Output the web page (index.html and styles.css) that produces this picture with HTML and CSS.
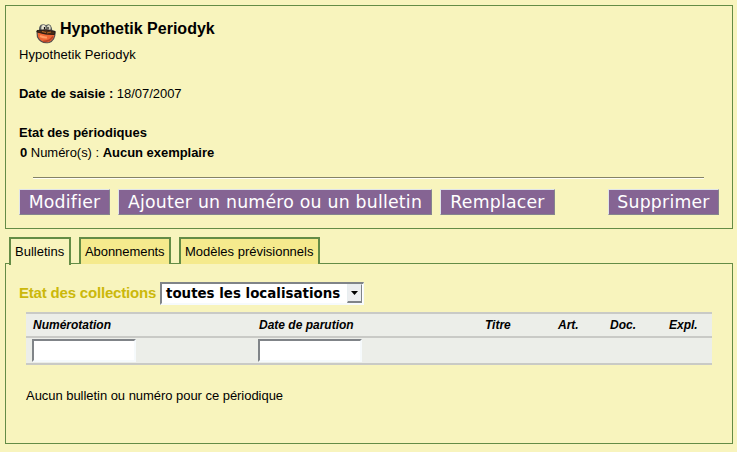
FILE: index.html
```html
<!DOCTYPE html>
<html lang="fr">
<head>
<meta charset="utf-8">
<title>Hypothetik Periodyk</title>
<link rel="stylesheet" href="styles.css">
</head>
<body>
<section class="panel record">
  <h1 class="title">
    <svg class="icon" viewBox="0 0 20 22" width="20" height="22">
      <path d="M3 7Q3 1 7 1.500L10 2Q15-.5 16.500 8Z" fill="#50565a"/>
      <ellipse cx="7.500" cy="5" rx="2.600" ry="3.500" fill="#e8e4d0" stroke="#555" stroke-width=".6"/>
      <ellipse cx="12.700" cy="5" rx="2.400" ry="3.300" fill="#dedac6" stroke="#343c3d" stroke-width=".6"/>
      <path d="M8.500 4v2.500M12 4v2.500" stroke="#111" stroke-width="1.200"/>
      <path d="M1 8.500Q10 5 19 8.500Q19.500 17 13 19.500Q5 21 1.500 14Z" fill="#ef6734" stroke="#564e4e" stroke-width="1.200"/>
      <path d="M1 7.500Q9 6 19 8.500L18.500 11.500Q10 12 1 9Z" fill="#4b2b15" stroke="#161311" stroke-width=".8"/>
      <path d="M6 8.500l4 1M11 10l4-1" stroke="#b36525"/>
      <path d="M4 13q4 2 7 1.500" stroke="#ff9b64" stroke-width="2" fill="none"/>
      <path d="M7 18.500q7 0 10-5" stroke="#b8442a" stroke-width="1.500" fill="none"/>
    </svg>
    <span>Hypothetik Periodyk</span>
  </h1>
  <p class="line subtitle">Hypothetik Periodyk</p>
  <p class="line entry"><b>Date de saisie :</b> 18/07/2007</p>
  <p class="line state"><b>Etat des périodiques</b></p>
  <p class="line count"><b>0</b> Numéro(s) : <b>Aucun exemplaire</b></p>
  <div class="rule"></div>
  <div class="actions">
    <button class="btn modify">Modifier</button>
    <button class="btn add">Ajouter un numéro ou un bulletin</button>
    <button class="btn replace">Remplacer</button>
    <button class="btn delete">Supprimer</button>
  </div>
</section>
<nav class="tabs">
  <span class="tab active">Bulletins</span>
  <span class="tab subs">Abonnements</span>
  <span class="tab models">Modèles prévisionnels</span>
</nav>
<section class="panel issues">
  <div class="collection">
    <h2 class="heading">Etat des collections</h2>
    <div class="select"><span class="value">toutes les localisations</span><span class="arrow"><svg width="7" height="4" viewBox="0 0 7 4"><path d="M0 0h7L3.500 4z"/></svg></span></div>
  </div>
  <div class="table">
    <div class="row head">
      <span>Numérotation</span><span>Date de parution</span><span>Titre</span><span>Art.</span><span>Doc.</span><span>Expl.</span>
    </div>
    <div class="row filter">
      <input class="field" type="text"><input class="field" type="text">
    </div>
  </div>
  <p class="empty">Aucun bulletin ou numéro pour ce périodique</p>
</section>
</body>
</html>
```
FILE: styles.css
```css
* { box-sizing: border-box; }
body {
  margin: 0;
  padding: 5px 4px 0 5px;
  height: 452px;
  overflow: hidden;
  background: #f8f4bd;
  color: #000;
  font: 13px "Liberation Sans", Arial, sans-serif;
}
h1, h2, p { margin: 0; white-space: nowrap; }
.panel { border: 1px solid #648c46; }
.record { height: 224px; padding: 10px 13px 0; }
.title {
  display: flex;
  height: 29px;
  padding-left: 17px;
  font-size: 16px;
  line-height: 25px;
}
.icon { margin: 7px 4px 0 0; }
.line { line-height: 20px; height: 20px; }
.subtitle { letter-spacing: .06px; }
.entry { margin-top: 19px; letter-spacing: -.03px; }
.state { margin-top: 19px; }
.count { padding-left: 1px; letter-spacing: -.03px; }
.rule {
  height: 2px;
  margin: 14px 15px 0 14px;
  border-top: 1px solid #858366;
  border-bottom: 1px solid #fffef5;
}
.actions { display: flex; margin-top: 10px; gap: 8px; }
.btn {
  height: 26px;
  padding: 0;
  border: 1px solid;
  border-color: #e0e4e8 #85848e #85848e #e0e4e8;
  background: #856493;
  color: #fff;
  font: 17.300px/22px "DejaVu Sans", sans-serif;
  letter-spacing: .23px;
  white-space: nowrap;
}
.modify { width: 91px; }
.add { width: 314px; }
.replace { width: 115px; }
.delete { width: 111px; margin-left: auto; }
.tabs {
  display: flex;
  gap: 8px;
  height: 28px;
  margin: 8px 0 -2px 4px;
  position: relative;
}
.tab {
  height: 27px;
  padding-left: 4px;
  border: 2px solid #648c46;
  border-bottom: 0;
  background: #f5ea8d;
  line-height: 26px;
  white-space: nowrap;
}
.active { width: 62px; height: 28px; background: #f8f4bd; }
.subs { width: 92px; letter-spacing: -.06px; }
.models { width: 141px; letter-spacing: -.01px; }
.issues { height: 181px; padding: 18px 20px 0; }
.collection { display: flex; margin-left: -7px; height: 23px; }
.heading {
  width: 141px;
  color: #cbb80b;
  font-size: 15px;
  line-height: 22px;
  letter-spacing: -.19px;
}
.select {
  display: flex;
  justify-content: space-between;
  width: 204px;
  height: 23px;
  padding-left: 4px;
  border: 2px solid;
  border-color: #808488 #f6fafc #f6fafc #808488;
  border-right-width: 1px;
  background: #fff;
}
.value {
  font: bold 13.400px/19px "DejaVu Sans", sans-serif;
  white-space: nowrap;
}
.arrow {
  display: flex;
  align-items: center;
  justify-content: center;
  width: 15px;
  height: 19px;
  margin-right: 1px;
  border: 1px solid #e8eef0;
  border-right-color: #808488;
  border-bottom: 2px solid #808488;
  background: #eceef0;
}
.table {
  width: 686px;
  margin-top: 7px;
  border-top: 2px solid #c9cac6;
  background: #eceee9;
}
.row {
  display: grid;
  grid-template-columns: 226px 226px 73px 52px 59px 44px;
  padding-left: 6px;
  border-bottom: 2px solid #c9cac6;
}
.head {
  height: 24px;
  padding-left: 7px;
  font: italic bold 12px/22px "Liberation Sans", sans-serif;
}
.filter { height: 27px; padding-top: 1px; }
.field {
  width: 104px;
  height: 23px;
  border: 2px solid;
  border-color: #808488 #f6fafc #f6fafc #808488;
  background: #fff;
}
.empty { margin-top: 21px; line-height: 20px; letter-spacing: -.04px; }
```
